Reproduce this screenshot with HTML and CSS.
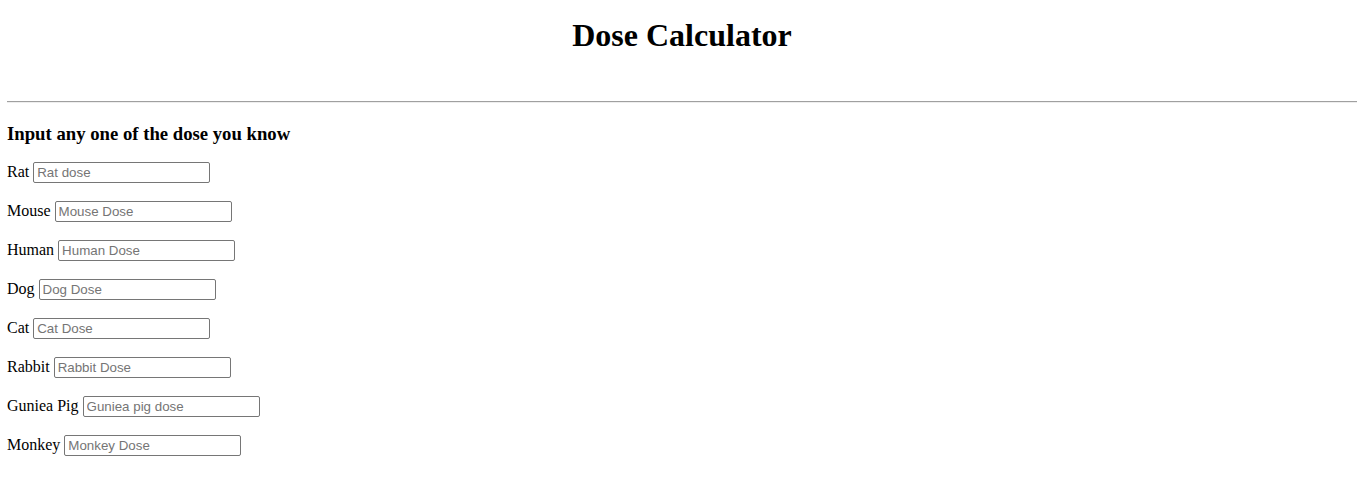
FILE: index.html
```html
<!DOCTYPE html>
<html>
<head>
<meta charset="utf-8">
<title>Dose Calculator</title>
<link rel="stylesheet" href="styles.css">
</head>
<body>
<h1 class="title">Dose Calculator</h1>
<br>
<hr class="rule">
<h3 class="subtitle">Input any one of the dose you know</h3>
<p class="row">Rat <input class="dose" type="text" placeholder="Rat dose"></p>
<p class="row">Mouse <input class="dose" type="text" placeholder="Mouse Dose"></p>
<p class="row">Human <input class="dose" type="text" placeholder="Human Dose"></p>
<p class="row">Dog <input class="dose" type="text" placeholder="Dog Dose"></p>
<p class="row">Cat <input class="dose" type="text" placeholder="Cat Dose"></p>
<p class="row">Rabbit <input class="dose" type="text" placeholder="Rabbit Dose"></p>
<p class="row">Guniea Pig <input class="dose" type="text" placeholder="Guniea pig dose"></p>
<p class="row">Monkey <input class="dose" type="text" placeholder="Monkey Dose"></p>
</body>
</html>
```
FILE: styles.css
```css
body {
  margin: 8px 2px 8px 7px;
  font-family: "Liberation Serif", "Times New Roman", serif;
  font-size: 16px;
  color: #000;
  background: #fff;
}
.title {
  text-align: center;
  font-size: 32px;
  font-weight: bold;
  margin: 9px 0 21px;
}
.rule {
  border: none;
  border-top: 1px solid #a0a0a0;
  border-bottom: 1px solid #eeeeee;
  margin: 8px 0;
  height: 0;
}
.subtitle {
  font-size: 18.72px;
  margin: 19.72px 0 15px;
}
.row {
  margin: 15px 0 16px;
  line-height: 23px;
}
.dose {
  font-family: "Liberation Sans", Arial, sans-serif;
  font-size: 13.33px;
  width: 177px;
  height: 21px;
  box-sizing: border-box;
  padding: 1px 3px;
  border: 1px solid #767676;
  border-radius: 2px;
  margin: 0;
  vertical-align: baseline;
}
.dose::placeholder {
  color: #757575;
}
```
